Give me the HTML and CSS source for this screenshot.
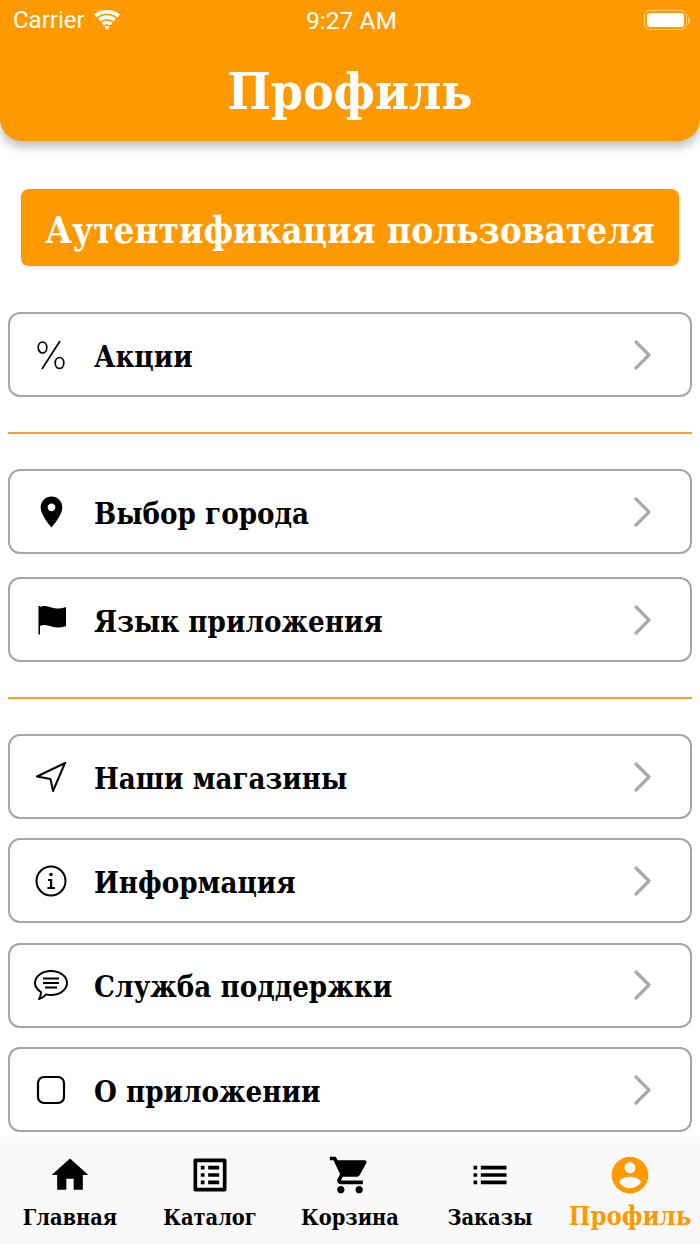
FILE: index.html
```html
<!DOCTYPE html>
<html lang="ru">
<head>
<meta charset="utf-8">
<title>Профиль</title>
<link rel="stylesheet" href="styles.css">
</head>
<body>
<div class="app">
  <header class="header">
    <div class="status">
      <div class="status-left"><span>Carrier</span>
        <svg class="wifi" viewBox="0 0 28 20"><path d="M14 3.500c4 0 7.500 1.500 10.300 4l2.700-3C23.500 1.300 19 0 14 0S4.500 1.300 1 4.500l2.700 3C6.500 5 10 3.500 14 3.500zM14 9c2.500 0 4.700 1 6.400 2.500l2.500-2.900C20.500 6.500 17.400 5.300 14 5.300S7.500 6.500 5.100 8.600l2.500 2.900C9.300 10 11.500 9 14 9zM14 14.300c1.200 0 2.300.4 3.100 1.200l2.300-2.700C17.900 11.500 16 10.700 14 10.700s-3.900.8-5.400 2.100l2.300 2.700c.8-.8 1.900-1.200 3.100-1.200zM14 20l2.500-3c-.7-.5-1.600-.9-2.500-.9s-1.800.4-2.500.9z"/></svg>
      </div>
      <div class="status-time">9:27 AM</div>
      <div class="status-right">
        <div class="battery"><div class="battery-fill"></div></div><div class="battery-tip"></div>
      </div>
    </div>
    <h1 class="title">Профиль</h1>
  </header>

  <main class="content">
    <button class="auth">Аутентификация пользователя</button>

    <a class="row row-first">
      <span class="row-icon"><svg class="ic" viewBox="0 0 32 32"><g fill="none" stroke="#000" stroke-width="1.700"><ellipse cx="7.500" cy="8.500" rx="4.300" ry="5.500"/><ellipse cx="24.500" cy="24" rx="4.300" ry="5.500"/><path d="M25 2 7 30"/></g></svg></span>
      <span class="row-label">Акции</span>
      <svg class="chev" viewBox="0 0 18 30"><path d="M2 2l13 13L2 28"/></svg>
    </a>
    <div class="divider"></div>
    <a class="row">
      <span class="row-icon"><svg class="ic ic-pin" viewBox="4 1 16 22"><path d="M12 2C8.130 2 5 5.130 5 9c0 5.250 7 13 7 13s7-7.750 7-13c0-3.870-3.130-7-7-7zm0 9.500c-1.380 0-2.500-1.120-2.500-2.500s1.120-2.500 2.500-2.500 2.500 1.120 2.500 2.500-1.120 2.500-2.500 2.500z"/></svg></span>
      <span class="row-label">Выбор города</span>
      <svg class="chev" viewBox="0 0 18 30"><path d="M2 2l13 13L2 28"/></svg>
    </a>
    <a class="row row-gap24">
      <span class="row-icon"><svg class="ic" viewBox="0 0 32 32"><path d="M3.500 2H5v1C9.500 1 12.500 2 16.500 3.500s8 1.500 14.500-.5v19c-6 2-10 2-14.500.5S9.500 20 5 22v8.500H3.500z"/></svg></span>
      <span class="row-label">Язык приложения</span>
      <svg class="chev" viewBox="0 0 18 30"><path d="M2 2l13 13L2 28"/></svg>
    </a>
    <div class="divider"></div>
    <a class="row">
      <span class="row-icon"><svg class="ic" viewBox="0 0 32 32"><path fill="none" stroke="#000" stroke-width="2" stroke-linejoin="round" d="M30 2 2 15.500l13.500 2.500L18 30z"/></svg></span>
      <span class="row-label">Наши магазины</span>
      <svg class="chev" viewBox="0 0 18 30"><path d="M2 2l13 13L2 28"/></svg>
    </a>
    <a class="row row-gap20">
      <span class="row-icon"><svg class="ic" viewBox="0 0 32 32"><circle cx="16" cy="16" r="14.500" fill="none" stroke="#000" stroke-width="2"/><circle cx="16" cy="9.500" r="1.800"/><path d="M13 14h4.200v8H20v2h-7.500v-2h2.500v-6h-2z"/></svg></span>
      <span class="row-label">Информация</span>
      <svg class="chev" viewBox="0 0 18 30"><path d="M2 2l13 13L2 28"/></svg>
    </a>
    <a class="row row-gap20">
      <span class="row-icon"><svg class="ic ic-chat" viewBox="0 0 34 32"><path fill="none" stroke="#000" stroke-width="2" stroke-linejoin="round" d="M17 2c8.800 0 16 5.400 16 12s-7.200 12-16 12c-1.700 0-3.300-.2-4.800-.6C10 27.800 7 29.500 5 30c1.300-1.700 2-4 2-7C3.500 20.800 1 17.600 1 14 1 7.400 8.200 2 17 2z"/><path fill="none" stroke="#000" stroke-width="1.800" d="M9 9.500h16M9 14h16M11 18.500h12"/></svg></span>
      <span class="row-label">Служба поддержки</span>
      <svg class="chev" viewBox="0 0 18 30"><path d="M2 2l13 13L2 28"/></svg>
    </a>
    <a class="row row-gap20">
      <span class="row-icon"><svg class="ic" viewBox="0 0 32 32"><rect x="3" y="3" width="26" height="26" rx="6" fill="none" stroke="#000" stroke-width="2.200"/></svg></span>
      <span class="row-label">О приложении</span>
      <svg class="chev" viewBox="0 0 18 30"><path d="M2 2l13 13L2 28"/></svg>
    </a>
  </main>

  <nav class="tabbar">
    <div class="tab">
      <svg class="tab-icon" viewBox="0 0 24 24"><path d="M10 20v-6h4v6h5v-8h3L12 3 2 12h3v8z"/></svg>
      <span class="tab-label">Главная</span>
    </div>
    <div class="tab">
      <svg class="tab-icon" viewBox="0 0 24 24"><path d="M19 5v14H5V5h14m1.100-2H3.900c-.5 0-.9.4-.9.9v16.200c0 .4.4.9.9.9h16.200c.4 0 .9-.5.9-.9V3.900c0-.5-.5-.9-.9-.9zM11 7h6v2h-6V7zm0 4h6v2h-6v-2zm0 4h6v2h-6zM7 7h2v2H7zm0 4h2v2H7zm0 4h2v2H7z"/></svg>
      <span class="tab-label">Каталог</span>
    </div>
    <div class="tab">
      <svg class="tab-icon" viewBox="0 0 24 24"><path d="M7 18c-1.100 0-1.990.9-1.990 2S5.900 22 7 22s2-.9 2-2-.9-2-2-2zM1 2v2h2l3.600 7.590-1.350 2.450c-.16.280-.25.610-.25.960 0 1.100.9 2 2 2h12v-2H7.420c-.14 0-.25-.11-.25-.25l.03-.12.9-1.630h7.450c.75 0 1.410-.41 1.750-1.030l3.580-6.490c.08-.14.120-.31.120-.48 0-.55-.45-1-1-1H5.210l-.94-2H1zm16 16c-1.100 0-1.990.9-1.990 2s.89 2 1.990 2 2-.9 2-2-.9-2-2-2z"/></svg>
      <span class="tab-label">Корзина</span>
    </div>
    <div class="tab">
      <svg class="tab-icon" viewBox="0 0 24 24"><path d="M3 13h2v-2H3v2zm0 4h2v-2H3v2zm0-8h2V7H3v2zm4 4h14v-2H7v2zm0 4h14v-2H7v2zM7 7v2h14V7H7z"/></svg>
      <span class="tab-label">Заказы</span>
    </div>
    <div class="tab tab-active">
      <svg class="tab-icon" viewBox="0 0 24 24"><path d="M12 2C6.480 2 2 6.480 2 12s4.480 10 10 10 10-4.480 10-10S17.520 2 12 2zm0 3c1.660 0 3 1.340 3 3s-1.340 3-3 3-3-1.340-3-3 1.340-3 3-3zm0 14.200c-2.500 0-4.710-1.280-6-3.220.03-1.990 4-3.080 6-3.080 1.990 0 5.970 1.090 6 3.080-1.290 1.940-3.500 3.220-6 3.220z"/></svg>
      <span class="tab-label">Профиль</span>
    </div>
  </nav>
</div>
</body>
</html>
```
FILE: styles.css
```css
* { box-sizing: border-box; }
html, body { margin: 0; padding: 0; background: #fff; }
.app {
  width: 700px;
  height: 1244px;
  display: flex;
  flex-direction: column;
  overflow: hidden;
  font-family: "DejaVu Serif Condensed", "DejaVu Serif", serif;
  font-weight: 700;
  color: #000;
}
.header {
  height: 141px;
  flex: none;
  background: #ff9900;
  border-radius: 0 0 22px 22px;
  box-shadow: 0 6px 10px rgba(0, 0, 0, 0.25);
  color: #fff;
}
.status {
  height: 40px;
  padding: 0 10px 0 13px;
  display: grid;
  grid-template-columns: 1fr auto 1fr;
  align-items: center;
  font-family: Roboto, sans-serif;
  font-weight: 400;
  font-size: 24px;
}
.status-left { display: flex; align-items: center; gap: 8px; }
.status-time { font-size: 24.600px; }
.wifi { width: 28px; height: 20px; fill: #fff; }
.status-right { display: flex; justify-content: flex-end; align-items: center; }
.battery {
  width: 43px;
  height: 20px;
  padding: 2px;
  border: 1.500px solid rgba(255, 255, 255, 0.5);
  border-radius: 6px;
}
.battery-fill { width: 100%; height: 100%; background: #fff; border-radius: 3px; }
.battery-tip {
  width: 2px;
  height: 7px;
  margin-left: 1px;
  background: rgba(255, 255, 255, 0.5);
  border-radius: 0 2px 2px 0;
}
.title {
  margin: 21px 0 0;
  font-size: 51px;
  line-height: 60px;
  font-weight: 700;
  text-align: center;
}
.content {
  flex: 1;
  min-height: 0;
  padding: 48px 8px 0;
  display: flex;
  flex-direction: column;
}
.auth {
  display: block;
  width: 658px;
  height: 77px;
  margin: 0 auto;
  padding: 5px 0 0;
  border: 0;
  border-radius: 8px;
  background: #ff9900;
  color: #fff;
  font: inherit;
  font-size: 36.600px;
  box-shadow: 0 1px 3px rgba(0, 0, 0, 0.12);
}
.row {
  display: flex;
  align-items: center;
  flex: none;
  height: 85px;
  padding: 0 38px 0 16px;
  border: 2px solid #a6a6a6;
  border-radius: 12px;
  background: #fff;
}
.row-first { margin-top: 46px; }
.row-gap24 { margin-top: 23px; }
.row-gap20 { margin-top: 19.400px; }
.row-icon { width: 50px; display: flex; justify-content: center; align-items: center; flex: none; }
.ic { width: 32px; height: 32px; fill: #000; display: block; }
.ic-pin { width: 25px; height: 34px; }
.ic-chat { width: 34px; height: 32px; }
.row-label { margin: 4px 0 0 18px; flex: 1; font-size: 29.200px; }
.chev { width: 18px; height: 30px; flex: none; }
.chev path { fill: none; stroke: #aaaaaa; stroke-width: 3.200; stroke-linecap: round; stroke-linejoin: round; }
.divider {
  flex: none;
  height: 2px;
  margin: 35px 0 35px;
  background: #ff9d2e;
}
.tabbar {
  flex: none;
  height: 107px;
  background: #f9f9f9;
  display: flex;
  padding-top: 16px;
}
.tab { display: flex; flex: 1 1 0; flex-direction: column; align-items: center; }
.tab-icon { width: 44px; height: 44px; display: block; fill: #000; }
.tab-label { margin-top: 8px; font-size: 21.600px; white-space: nowrap; }
.tab-active { color: #ff9900; }
.tab-active .tab-icon { fill: #ff9900; }
.tab-active .tab-label { font-size: 25.500px; margin-top: 4px; }
```
